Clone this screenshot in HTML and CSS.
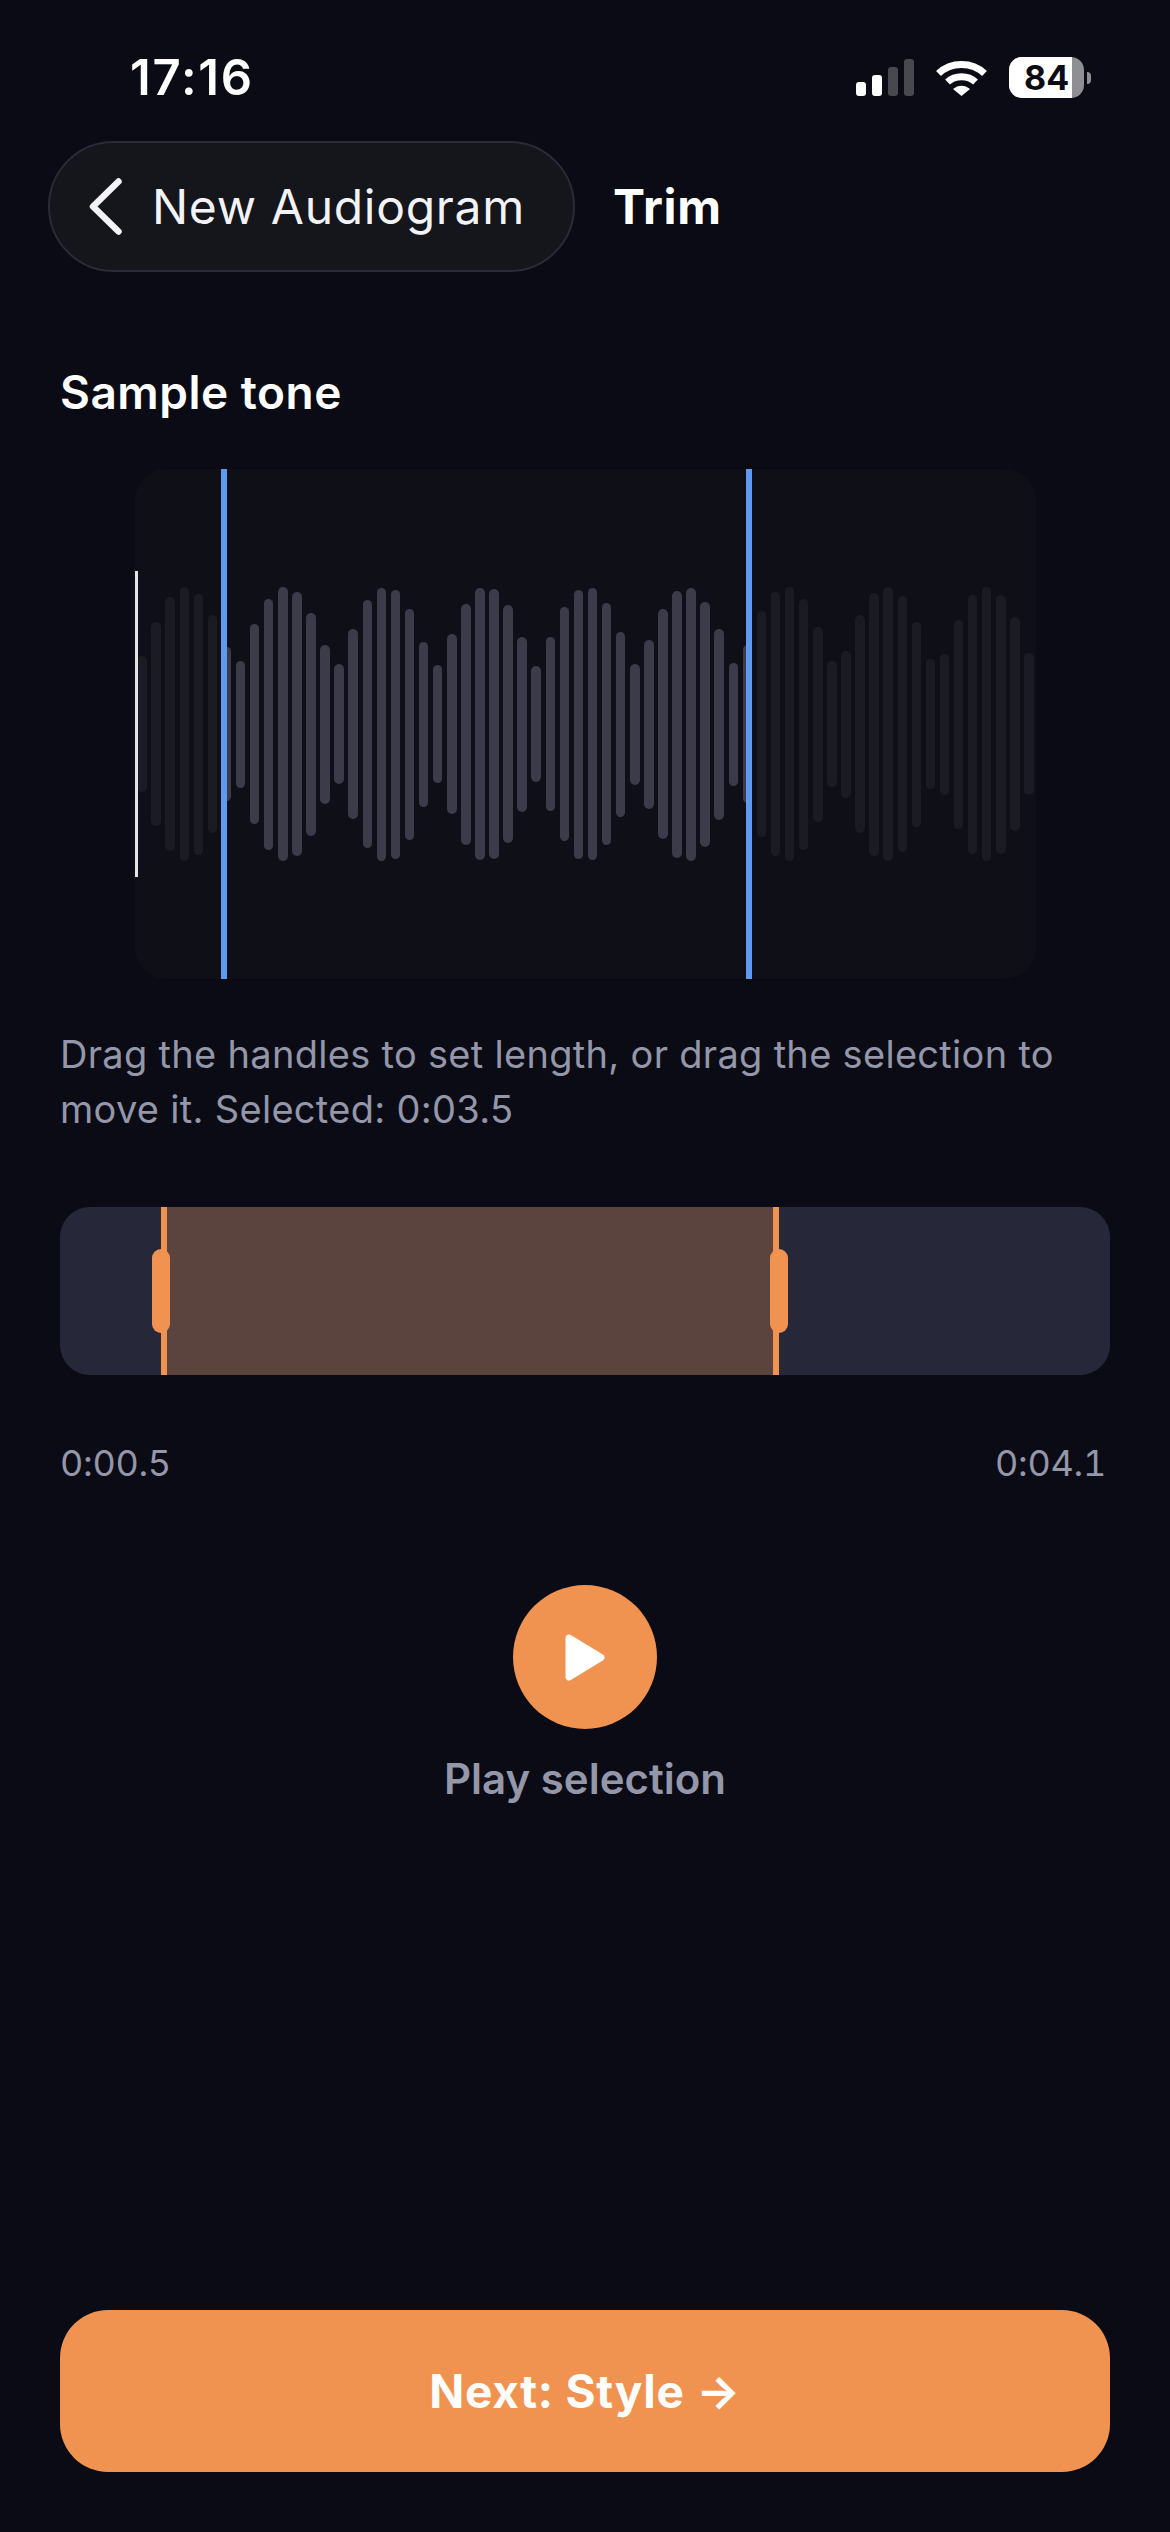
FILE: index.html
```html
<!DOCTYPE html>
<html lang="en">
<head>
    <meta charset="UTF-8">
    <meta name="viewport" content="width=device-width, initial-scale=1.0">
    <title>Trim</title>
    <link rel="stylesheet" href="styles.css">
</head>
<body>
<div class="screen">

    <!-- Status bar -->
    <div class="status-bar">
        <span class="clock">17:16</span>
        <div class="status-icons">
            <div class="signal">
                <span class="signal-bar on s1"></span>
                <span class="signal-bar on s2"></span>
                <span class="signal-bar s3"></span>
                <span class="signal-bar s4"></span>
            </div>
            <svg class="wifi" viewBox="0 0 51 37" width="51" height="37">
                <path d="M2.5 14.5 C15 2.500 36 2.500 48.500 14.500" fill="none" stroke="#fff" stroke-width="7"/>
                <path d="M11.500 23 C19 16 32 16 39.500 23" fill="none" stroke="#fff" stroke-width="7"/>
                <path d="M17 30 C22 25.500 29 25.500 34 30 L25.500 37 Z" fill="#fff"/>
            </svg>
            <div class="battery">
                <div class="battery-body">
                    <div class="battery-fill"></div>
                    <span class="battery-level">84</span>
                </div>
                <div class="battery-cap"></div>
            </div>
        </div>
    </div>

    <!-- Nav -->
    <div class="nav">
        <div class="back-pill">
            <svg class="chevron" viewBox="0 0 33 57" width="33" height="57">
                <path d="M29.500 3.500 L4 28.500 L29.500 53.500" fill="none" stroke="#f2f2f7" stroke-width="6.500" stroke-linecap="round" stroke-linejoin="round"/>
            </svg>
            <span>New Audiogram</span>
        </div>
        <span class="nav-title">Trim</span>
    </div>

    <h2 class="clip-name">Sample tone</h2>

    <!-- Waveform -->
    <div class="waveform">
        <div class="bars">
            <i class="bar" style="height:136px"></i><i class="bar" style="height:204px"></i><i class="bar" style="height:254px"></i><i class="bar" style="height:274px"></i>
            <i class="bar" style="height:261px"></i><i class="bar" style="height:218px"></i>
            <i class="bar lit" style="height:154px"></i><i class="bar lit" style="height:127px"></i><i class="bar lit" style="height:200px"></i><i class="bar lit" style="height:251px"></i>
            <i class="bar lit" style="height:274px"></i><i class="bar lit" style="height:264px"></i><i class="bar lit" style="height:223px"></i><i class="bar lit" style="height:159px"></i>
            <i class="bar lit" style="height:120px"></i><i class="bar lit" style="height:190px"></i><i class="bar lit" style="height:248px"></i><i class="bar lit" style="height:273px"></i>
            <i class="bar lit" style="height:269px"></i><i class="bar lit" style="height:231px"></i><i class="bar lit" style="height:165px"></i><i class="bar lit" style="height:118px"></i>
            <i class="bar lit" style="height:180px"></i><i class="bar lit" style="height:241px"></i><i class="bar lit" style="height:272px"></i><i class="bar lit" style="height:270px"></i>
            <i class="bar lit" style="height:238px"></i><i class="bar lit" style="height:175px"></i><i class="bar lit" style="height:116px"></i><i class="bar lit" style="height:174px"></i>
            <i class="bar lit" style="height:234px"></i><i class="bar lit" style="height:269px"></i><i class="bar lit" style="height:272px"></i><i class="bar lit" style="height:242px"></i>
            <i class="bar lit" style="height:185px"></i><i class="bar lit" style="height:121px"></i><i class="bar lit" style="height:169px"></i><i class="bar lit" style="height:230px"></i>
            <i class="bar lit" style="height:267px"></i><i class="bar lit" style="height:273px"></i><i class="bar lit" style="height:245px"></i><i class="bar lit" style="height:191px"></i>
            <i class="bar lit" style="height:123px"></i><i class="bar lit" style="height:158px"></i>
            <i class="bar" style="height:226px"></i><i class="bar" style="height:264px"></i><i class="bar" style="height:274px"></i><i class="bar" style="height:251px"></i>
            <i class="bar" style="height:195px"></i><i class="bar" style="height:126px"></i><i class="bar" style="height:147px"></i><i class="bar" style="height:218px"></i>
            <i class="bar" style="height:263px"></i><i class="bar" style="height:274px"></i><i class="bar" style="height:256px"></i><i class="bar" style="height:205px"></i>
            <i class="bar" style="height:130px"></i><i class="bar" style="height:141px"></i><i class="bar" style="height:209px"></i><i class="bar" style="height:259px"></i>
            <i class="bar" style="height:274px"></i><i class="bar" style="height:259px"></i><i class="bar" style="height:214px"></i><i class="bar" style="height:142px"></i>
        </div>
        <div class="playhead"></div>
        <div class="wave-handle start"></div>
        <div class="wave-handle end"></div>
    </div>

    <p class="hint">Drag the handles to set length, or drag the selection to move it. Selected: 0:03.5</p>

    <!-- Trim range -->
    <div class="trim-track">
        <div class="trim-selection">
            <span class="trim-knob left"></span>
            <span class="trim-knob right"></span>
        </div>
    </div>

    <div class="trim-times">
        <span>0:00.5</span>
        <span>0:04.1</span>
    </div>

    <!-- Playback -->
    <div class="play-group">
        <div class="play-btn">
            <svg viewBox="0 0 40 47" width="40" height="47">
                <path d="M4 4 L36 23.500 L4 43 Z" fill="#fff" stroke="#fff" stroke-width="7" stroke-linejoin="round"/>
            </svg>
        </div>
        <span class="play-label">Play selection</span>
    </div>

    <button class="next-btn">Next: Style →</button>
</div>
</body>
</html>
```

FILE: styles.css
```css
:root {
    --background: #0a0b14;
    --orange: #f19350;
    --muted: #9496a9;
    --blue: #6199f0;
}

* {
    box-sizing: border-box;
}

body {
    margin: 0;
    background: var(--background);
    color: #fff;
    font-family: Inter, "Liberation Sans", sans-serif;
}

.screen {
    height: 2532px;
    display: flex;
    flex-direction: column;
    padding: 0 60px 60px;
}

/* Status bar */
.status-bar {
    height: 141px;
    flex: none;
    display: flex;
    justify-content: space-between;
    align-items: flex-start;
    padding: 50px 0 0 70px;
}

.clock {
    font-size: 49px;
    line-height: 56px;
    font-weight: 600;
    letter-spacing: 1.800px;
}

.status-icons {
    display: flex;
    align-items: flex-start;
    margin-top: 7px;
    margin-right: 19px;
}

.signal {
    display: flex;
    align-items: flex-end;
    gap: 6px;
    height: 37px;
    margin-top: 2px;
    margin-right: 22px;
}

.signal-bar {
    width: 10px;
    background: #48484f;
    border-radius: 3px;
}

.signal-bar.on {
    background: #fff;
}

.s1 { height: 14px; }
.s2 { height: 21px; }
.s3 { height: 29px; }
.s4 { height: 37px; }

.wifi {
    margin-top: 2px;
    margin-right: 22px;
}

.battery {
    display: flex;
    align-items: center;
    gap: 3px;
}

.battery-body {
    position: relative;
    width: 75px;
    height: 41px;
    border-radius: 13px;
    overflow: hidden;
    background: #8e8e93;
    display: flex;
    align-items: center;
    padding-left: 15px;
}

.battery-fill {
    position: absolute;
    top: 0;
    left: 0;
    bottom: 0;
    width: 63px;
    background: #fff;
}

.battery-level {
    position: relative;
    color: #0a0b14;
    font-size: 34px;
    font-weight: 700;
    line-height: 41px;
}

.battery-cap {
    width: 4px;
    height: 12px;
    background: #8e8e93;
    border-radius: 0 6px 6px 0;
}

/* Nav */
.nav {
    display: flex;
    align-items: center;
    gap: 38px;
    margin-left: -12px;
    flex: none;
}

.back-pill {
    display: flex;
    align-items: center;
    gap: 30px;
    height: 131px;
    width: 527px;
    padding-left: 39px;
    border-radius: 66px;
    background: #15151c;
    border: 2px solid #2b2b35;
    font-size: 48px;
    letter-spacing: 0.700px;
    color: #f2f2f7;
}

.nav-title {
    font-size: 48px;
    font-weight: 700;
    letter-spacing: 0.700px;
}

.clip-name {
    margin: 92px 0 0;
    font-size: 46px;
    line-height: 56px;
    font-weight: 600;
    letter-spacing: 0.500px;
}

/* Waveform */
.waveform {
    position: relative;
    width: 901px;
    height: 510px;
    margin: 49px 0 0 75px;
    flex: none;
    background: #0f1017;
    border-radius: 32px;
}

.bars {
    display: grid;
    grid-template-columns: repeat(64, 1fr);
    align-items: center;
    justify-items: center;
    height: 100%;
}

.bar {
    width: 9.500px;
    background: #1b1b24;
    border-radius: 5px;
}

.bar.lit {
    background: #3b3b49;
}

.playhead {
    position: absolute;
    left: 0;
    top: 102px;
    width: 3px;
    height: 306px;
    background: #e4e4e8;
}

.wave-handle {
    position: absolute;
    top: 0;
    bottom: 0;
    width: 6px;
    background: var(--blue);
}

.wave-handle.start { left: 86px; }
.wave-handle.end { left: 611px; }

.hint {
    margin: 48px 0 0;
    font-size: 38px;
    line-height: 55px;
    letter-spacing: 0.300px;
    color: var(--muted);
}

/* Trim range */
.trim-track {
    position: relative;
    height: 168px;
    margin-top: 70px;
    flex: none;
    background: #262839;
    border-radius: 30px;
}

.trim-selection {
    position: absolute;
    top: 0;
    bottom: 0;
    left: 101px;
    width: 618px;
    background: #5a443d;
    border-left: 6px solid var(--orange);
    border-right: 6px solid var(--orange);
}

.trim-knob {
    position: absolute;
    top: 42px;
    width: 18px;
    height: 84px;
    border-radius: 9px;
    background: var(--orange);
}

.trim-knob.left { left: -15px; }
.trim-knob.right { right: -15px; }

.trim-times {
    display: flex;
    justify-content: space-between;
    margin-top: 66px;
    padding-right: 4px;
    font-size: 36px;
    line-height: 44px;
    letter-spacing: -0.300px;
    font-variant-numeric: tabular-nums;
    color: var(--muted);
}

/* Playback */
.play-group {
    display: flex;
    flex-direction: column;
    align-items: center;
    margin-top: 100px;
}

.play-btn {
    width: 144px;
    height: 144px;
    border-radius: 50%;
    background: var(--orange);
    display: flex;
    align-items: center;
    justify-content: center;
}

.play-label {
    margin-top: 24px;
    font-size: 42px;
    line-height: 52px;
    font-weight: 600;
    color: var(--muted);
}

.next-btn {
    margin-top: auto;
    height: 162px;
    flex: none;
    border: none;
    border-radius: 48px;
    background: var(--orange);
    color: #fff;
    font-family: inherit;
    font-size: 46px;
    font-weight: 700;
    letter-spacing: 0.700px;
}
```
